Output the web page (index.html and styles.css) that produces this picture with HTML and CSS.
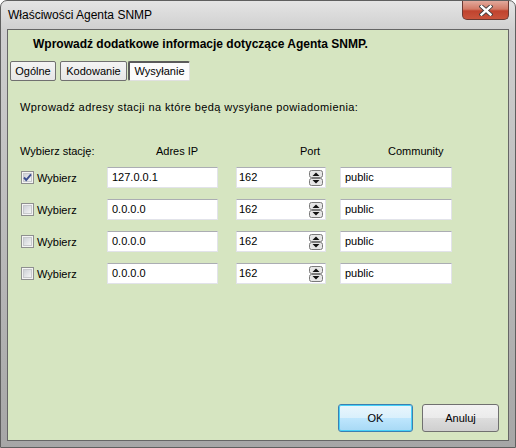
FILE: index.html
```html
<!DOCTYPE html>
<html lang="pl">
<head>
<meta charset="utf-8">
<title>Właściwości Agenta SNMP</title>
<link rel="stylesheet" href="styles.css">
</head>
<body>
<div class="window">
  <div class="titlebar">
    <span class="title">Właściwości Agenta SNMP</span>
    <div class="close">
      <svg width="14" height="11" viewBox="0 0 14 11">
        <path d="M2.5 1.5 L11.5 9.5 M11.5 1.5 L2.5 9.5" stroke="#3a3a3a" stroke-width="4.2" stroke-linecap="square" fill="none"/>
        <path d="M2.5 1.5 L11.5 9.5 M11.5 1.5 L2.5 9.5" stroke="#ffffff" stroke-width="2.4" stroke-linecap="square" fill="none"/>
      </svg>
    </div>
  </div>
  <div class="client">
    <div class="heading">Wprowadź dodatkowe informacje dotyczące Agenta SNMP.</div>
    <div class="tabs">
      <div class="tab">Ogólne</div>
      <div class="tab tab-k">Kodowanie</div>
      <div class="tab active">Wysyłanie</div>
    </div>
    <p class="intro">Wprowadź adresy stacji na które będą wysyłane powiadomienia:</p>
    <div class="table">
      <div class="row head">
        <div class="c1 h1">Wybierz stację:</div>
        <div class="c2 h2">Adres IP</div>
        <div class="c3 h3">Port</div>
        <div class="c4 h4">Community</div>
      </div>
      <div class="row">
        <label class="c1 check">
          <svg class="box" width="13" height="13" viewBox="0 0 13 13">
            <rect x="0.5" y="0.5" width="12" height="12" fill="#f4f4f4" stroke="#8e8f8f"/>
            <rect x="2.5" y="2.5" width="8" height="8" fill="url(#cbg)" stroke="#c7c9cc"/>
            <defs><linearGradient id="cbg" x1="0" y1="0" x2="1" y2="1"><stop offset="0" stop-color="#cbcfd5"/><stop offset="1" stop-color="#f6f6f6"/></linearGradient></defs>
            <path d="M3 6.5 L5.2 9 L10 3.3" stroke="#3c4f8f" stroke-width="1.9" fill="none"/>
          </svg>
          <span>Wybierz</span>
        </label>
        <div class="c2 field">127.0.0.1</div>
        <div class="c3 field spin"><span>162</span><svg class="arrows" width="14" height="16" viewBox="0 0 14 16"><rect x="0.5" y="0.5" width="13" height="7" rx="2" fill="#e6e6e6" stroke="#7a7a7a"/><rect x="0.5" y="8.5" width="13" height="7" rx="2" fill="#e6e6e6" stroke="#7a7a7a"/><path d="M3.5 6 L7 2.5 L10.5 6 Z" fill="#111"/><path d="M3.5 10 L7 13.5 L10.5 10 Z" fill="#111"/></svg></div>
        <div class="c4 field">public</div>
      </div>
      <div class="row">
        <label class="c1 check">
          <svg class="box" width="13" height="13" viewBox="0 0 13 13">
            <rect x="0.5" y="0.5" width="12" height="12" fill="#f4f4f4" stroke="#8e8f8f"/>
            <rect x="2.5" y="2.5" width="8" height="8" fill="url(#cbg)" stroke="#c7c9cc"/>
          </svg>
          <span>Wybierz</span>
        </label>
        <div class="c2 field">0.0.0.0</div>
        <div class="c3 field spin"><span>162</span><svg class="arrows" width="14" height="16" viewBox="0 0 14 16"><rect x="0.5" y="0.5" width="13" height="7" rx="2" fill="#e6e6e6" stroke="#7a7a7a"/><rect x="0.5" y="8.5" width="13" height="7" rx="2" fill="#e6e6e6" stroke="#7a7a7a"/><path d="M3.5 6 L7 2.5 L10.5 6 Z" fill="#111"/><path d="M3.5 10 L7 13.5 L10.5 10 Z" fill="#111"/></svg></div>
        <div class="c4 field">public</div>
      </div>
      <div class="row">
        <label class="c1 check">
          <svg class="box" width="13" height="13" viewBox="0 0 13 13">
            <rect x="0.5" y="0.5" width="12" height="12" fill="#f4f4f4" stroke="#8e8f8f"/>
            <rect x="2.5" y="2.5" width="8" height="8" fill="url(#cbg)" stroke="#c7c9cc"/>
          </svg>
          <span>Wybierz</span>
        </label>
        <div class="c2 field">0.0.0.0</div>
        <div class="c3 field spin"><span>162</span><svg class="arrows" width="14" height="16" viewBox="0 0 14 16"><rect x="0.5" y="0.5" width="13" height="7" rx="2" fill="#e6e6e6" stroke="#7a7a7a"/><rect x="0.5" y="8.5" width="13" height="7" rx="2" fill="#e6e6e6" stroke="#7a7a7a"/><path d="M3.5 6 L7 2.5 L10.5 6 Z" fill="#111"/><path d="M3.5 10 L7 13.5 L10.5 10 Z" fill="#111"/></svg></div>
        <div class="c4 field">public</div>
      </div>
      <div class="row">
        <label class="c1 check">
          <svg class="box" width="13" height="13" viewBox="0 0 13 13">
            <rect x="0.5" y="0.5" width="12" height="12" fill="#f4f4f4" stroke="#8e8f8f"/>
            <rect x="2.5" y="2.5" width="8" height="8" fill="url(#cbg)" stroke="#c7c9cc"/>
          </svg>
          <span>Wybierz</span>
        </label>
        <div class="c2 field">0.0.0.0</div>
        <div class="c3 field spin"><span>162</span><svg class="arrows" width="14" height="16" viewBox="0 0 14 16"><rect x="0.5" y="0.5" width="13" height="7" rx="2" fill="#e6e6e6" stroke="#7a7a7a"/><rect x="0.5" y="8.5" width="13" height="7" rx="2" fill="#e6e6e6" stroke="#7a7a7a"/><path d="M3.5 6 L7 2.5 L10.5 6 Z" fill="#111"/><path d="M3.5 10 L7 13.5 L10.5 10 Z" fill="#111"/></svg></div>
        <div class="c4 field">public</div>
      </div>
    </div>
    <div class="actions">
      <div class="btn default">OK</div>
      <div class="btn cancel">Anuluj</div>
    </div>
  </div>
</div>
</body>
</html>
```
FILE: styles.css
```css
* { box-sizing: border-box; }
html, body { margin: 0; padding: 0; background: #ffffff; }
body {
  font-family: "Liberation Sans", Arial, sans-serif;
  font-size: 11px;
  color: #000;
}
.window {
  width: 516px;
  height: 448px;
  border: 1px solid #5f5f5f;
  border-radius: 7px 7px 0 0;
  background: linear-gradient(to bottom, #e4e4e4 0px, #cfcfcf 30px, #b4b4b4 300px, #a6a6a6 448px);
  padding: 0 6px 6px 6px;
  display: flex;
  flex-direction: column;
}
.titlebar {
  height: 28px;
  display: flex;
  align-items: flex-start;
  justify-content: space-between;
  margin: 0 -6px;
  padding: 0 6px 0 7px;
}
.title {
  font-size: 12px;
  line-height: 28px;
  color: #000;
}
.close {
  width: 47px;
  height: 19px;
  border: 1px solid #6b3a33;
  border-top: none;
  border-radius: 0 0 5px 5px;
  background: linear-gradient(to bottom, #e2a99c 0%, #d27a66 45%, #c0432e 55%, #c9543c 100%);
  display: flex;
  align-items: center;
  justify-content: center;
}
.client {
  flex: 1;
  border: 1px solid #666666;
  background: #d6e5c1;
  display: flex;
  flex-direction: column;
}
.heading {
  font-weight: bold;
  font-size: 12px;
  line-height: 14px;
  margin: 7px 0 0 25px;
}
.tabs {
  display: flex;
  margin: 10px 0 0 2px;
  height: 20px;
}
.tab {
  height: 20px;
  line-height: 18px;
  padding: 0 3px;
  border: 1px solid #707070;
  border-radius: 2px;
  background: linear-gradient(to bottom, #f4f4f4, #e6e6e6);
  margin-right: 4px;
  text-align: center;
}
.tab:nth-child(1) { width: 46px; }
.tab-k { width: 67px; margin-right: 1px; }
.tab.active {
  width: 62px;
  background: #fbfbfb;
  border-color: #5a5a5a #e0e0e0 #e0e0e0 #5a5a5a;
  border-width: 2px 1px 1px 2px;
  line-height: 17px;
}
.intro {
  margin: 19px 0 0 12px;
  line-height: 14px;
  letter-spacing: 0.4px;
}
.table {
  margin: 30px 0 0 13px;
  display: flex;
  flex-direction: column;
  gap: 11px;
}
.row {
  display: flex;
  align-items: center;
  height: 21px;
}
.row.head { height: 14px; margin-bottom: -2px; }
.c1 { width: 86px; }
.c2 { width: 111px; }
.c3 { width: 90px; margin-left: 18px; }
.c4 { width: 112px; margin-left: 14px; }
.h1 { margin-left: -1px; width: 87px; }
.h2 { padding-left: 49px; }
.h3 { padding-left: 64px; }
.h4 { padding-left: 48px; }
.check {
  display: flex;
  align-items: center;
  gap: 3px;
}
.check .box { flex: none; display: block; }
.field {
  height: 21px;
  background: #ffffff;
  border: 1px solid #e2e3ea;
  border-top-color: #abadb3;
  padding: 0 4px;
  line-height: 19px;
}
.spin {
  display: flex;
  align-items: center;
  justify-content: space-between;
  padding-left: 2px;
  padding-right: 2px;
}
.arrows { display: block; }
.actions {
  margin-top: auto;
  display: flex;
  justify-content: flex-end;
  gap: 9px;
  padding: 0 9px 8px 0;
}
.btn {
  height: 28px;
  line-height: 26px;
  text-align: center;
  border-radius: 3px;
  border: 1px solid #707070;
  background: linear-gradient(to bottom, #f2f2f2 0%, #ebebeb 50%, #dddddd 51%, #cfcfcf 100%);
}
.btn.default {
  width: 75px;
  border-color: #3c7fb1;
  background: linear-gradient(to bottom, #eaf6fd 0%, #d9f0fc 50%, #bee6fd 51%, #a7d9f5 100%);
  box-shadow: inset 0 0 0 1px #48d1f8;
}
.btn.cancel { width: 77px; }
```
